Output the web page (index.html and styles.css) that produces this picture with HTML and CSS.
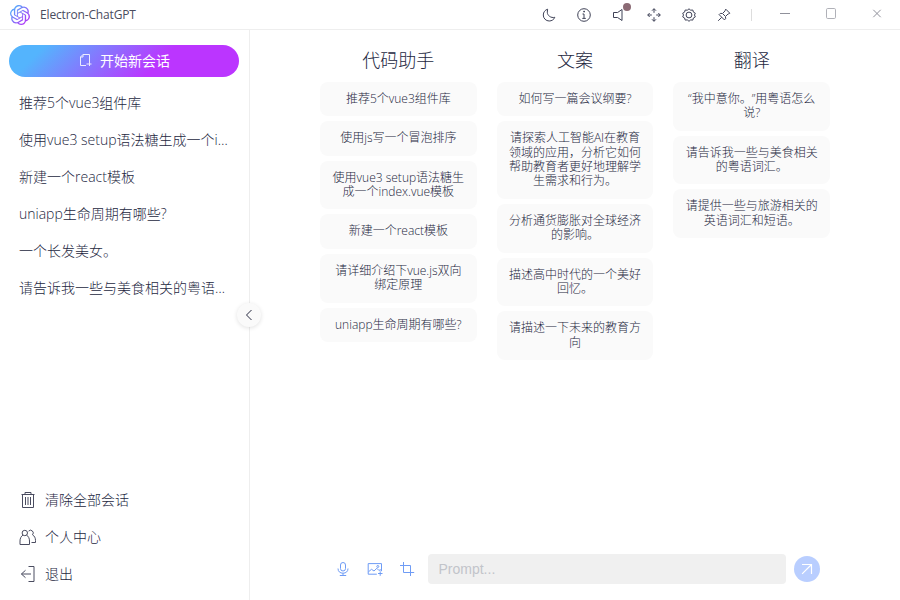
FILE: index.html
```html
<!DOCTYPE html>
<html lang="zh-CN">
<head>
<meta charset="utf-8">
<title>Electron-ChatGPT</title>
<link rel="stylesheet" href="styles.css">
</head>
<body>
<header class="titlebar">
  <svg class="logo" viewBox="0 0 24 24"><defs><linearGradient id="lg" x1="0" y1="0" x2="1" y2="1"><stop offset="0.1" stop-color="#4fb2fb"/><stop offset="0.85" stop-color="#b034f8"/></linearGradient></defs><path fill="url(#lg)" d="M22.2819 9.8211a5.9847 5.9847 0 0 0-.5157-4.9108 6.0462 6.0462 0 0 0-6.5098-2.9A6.0651 6.0651 0 0 0 4.9807 4.1818a5.9847 5.9847 0 0 0-3.9977 2.9 6.0462 6.0462 0 0 0 .7427 7.0966 5.98 5.98 0 0 0 .511 4.9107 6.051 6.051 0 0 0 6.5146 2.9001A5.9847 5.9847 0 0 0 13.2599 24a6.0557 6.0557 0 0 0 5.7718-4.2058 5.9894 5.9894 0 0 0 3.9977-2.9001 6.0557 6.0557 0 0 0-.7475-7.0729zm-9.022 12.6081a4.4755 4.4755 0 0 1-2.8764-1.0408l.1419-.0804 4.7783-2.7582a.7948.7948 0 0 0 .3927-.6813v-6.7369l2.02 1.1686a.071.071 0 0 1 .038.052v5.5826a4.504 4.504 0 0 1-4.4945 4.4944zm-9.6607-4.1254a4.4708 4.4708 0 0 1-.5346-3.0137l.142.0852 4.783 2.7582a.7712.7712 0 0 0 .7806 0l5.8428-3.3685v2.3324a.0804.0804 0 0 1-.0332.0615L9.74 19.9502a4.4992 4.4992 0 0 1-6.1408-1.6464zM2.3408 7.8956a4.485 4.485 0 0 1 2.3655-1.9728V11.6a.7664.7664 0 0 0 .3879.6765l5.8144 3.3543-2.0201 1.1685a.0757.0757 0 0 1-.071 0l-4.8303-2.7865A4.504 4.504 0 0 1 2.3408 7.872zm16.5963 3.8558L13.1038 8.364 15.1192 7.2a.0757.0757 0 0 1 .071 0l4.8303 2.7913a4.4944 4.4944 0 0 1-.6765 8.1042v-5.6772a.79.79 0 0 0-.407-.667zm2.0107-3.0231l-.142-.0852-4.7735-2.7818a.7759.7759 0 0 0-.7854 0L9.409 9.2297V6.8974a.0662.0662 0 0 1 .0284-.0615l4.8303-2.7866a4.4992 4.4992 0 0 1 6.6802 4.66zM8.3065 12.863l-2.02-1.1638a.0804.0804 0 0 1-.038-.0567V6.0742a4.4992 4.4992 0 0 1 7.3757-3.4537l-.142.0805L8.704 5.459a.7948.7948 0 0 0-.3927.6813zm1.0976-2.3654l2.602-1.4998 2.6069 1.4998v2.9994l-2.5974 1.4997-2.6067-1.4997Z"/></svg>
  <span class="app-name">Electron-ChatGPT</span>
  <div class="tools">
    <span class="tool"><svg class="icon" viewBox="0 0 16 16"><path d="M6.600 2.200C4 3 2.300 5.200 2.300 8a5.900 5.900 0 0 0 5.900 6c2.600 0 4.700-1.400 5.600-3.700C10 11.300 6.300 8.600 6.300 5.200c0-1.100.1-2.100.300-3z"/></svg></span>
    <span class="tool"><svg class="icon" viewBox="0 0 16 16"><circle cx="8" cy="8" r="6.300"/><path d="M6.500 7H8v4.300M6.300 11.400h3.500M7.700 4.200h.8v.8h-.8z"/></svg></span>
    <span class="tool"><svg class="icon" viewBox="0 0 16 16"><path d="M11 2.500v11L6.600 10.500H2.500V5.500h4.100z"/></svg><i class="dot"></i></span>
    <span class="tool"><svg class="icon" viewBox="0 0 16 16"><path d="M8 1.800v4M8 10.200v4M1.800 8h4M10.200 8h4M6 3.700l2-2 2 2M6 12.300l2 2 2-2M3.700 6l-2 2 2 2M12.300 6l2 2-2 2"/></svg></span>
    <span class="tool"><svg class="icon" viewBox="0 0 16 16"><path d="M6.300 3.200L8 1.800l1.700 1.400 2.100-.200.600 2.100 1.900 1.100L13.500 8l.8 1.900-1.900 1.100-.600 2.100-2.100-.2L8 14.300l-1.700-1.400-2.100.2-.600-2.100-1.900-1.100L2.500 8l-.8-1.800 1.900-1.100.600-2.100z"/><circle cx="8" cy="8" r="2.900"/></svg></span>
    <span class="tool"><svg class="icon" viewBox="0 0 16 16"><path d="M9.800 2.200l4 4-1 .7-.6-.1-2.700 2.700.1 2.200-1.200 1.200-5.300-5.300 1.200-1.200 2.200.1 2.700-2.700-.1-.7zM5.700 10.300L2.200 13.800M7 7l2 2"/></svg></span>
  </div>
  <i class="divider"></i>
  <div class="window-buttons">
    <span class="win"><svg class="icon" viewBox="0 0 16 16"><path d="M3 6.500h10"/></svg></span>
    <span class="win"><svg class="icon pale" viewBox="0 0 16 16"><rect x="3.500" y="1.500" width="9" height="10" rx="1.200"/></svg></span>
    <span class="win"><svg class="icon" viewBox="0 0 16 16"><path d="M4.300 2.800l7.400 7.400M11.700 2.800l-7.400 7.400"/></svg></span>
  </div>
</header>
<div class="body">
  <aside class="sidebar">
    <button class="new-chat"><svg class="icon" viewBox="0 0 16 16"><path d="M6 2.500H12.500v8.500M6 2.500L3.500 5v8.500h5.500M6 2.500V5H3.500M9.500 12h5M12.500 9.500v4.500"/></svg><span>开始新会话</span></button>
    <ul class="chats">
      <li>推荐5个vue3组件库</li>
      <li>使用vue3 setup语法糖生成一个index.vue模板</li>
      <li>新建一个react模板</li>
      <li>uniapp生命周期有哪些?</li>
      <li>一个长发美女。</li>
      <li>请告诉我一些与美食相关的粤语词汇。</li>
    </ul>
    <ul class="menu">
      <li><svg class="icon" viewBox="0 0 18 18"><path d="M2.500 3.500h13M6 3.300V1.500h6v1.800M3.500 3.700v12.800h11V3.700M6.500 6v8M9 6v8M11.500 6v8"/></svg><span>清除全部会话</span></li>
      <li><svg class="icon" viewBox="0 0 18 18"><circle cx="5.800" cy="5" r="2.700"/><path d="M4 7C2 8.300 1 10.500 1 13v3.500h9.500V13c0-2.500-1-4.700-3-6M9.600 3.100a2.600 2.600 0 1 1 3.900 3.700c2 1.200 3 3.200 3 5.700v2h-4"/></svg><span>个人中心</span></li>
      <li><svg class="icon" viewBox="0 0 18 18"><path d="M9.500 1.500h5.500v15H9.500M12 9h-9.500M6.500 5.300L2.400 9l4.100 3.700"/></svg><span>退出</span></li>
    </ul>
    <span class="collapse"><svg class="icon" viewBox="0 0 16 16"><path d="M10.500 3L5.500 8l5 5"/></svg></span>
  </aside>
  <main class="main">
    <div class="prompts">
      <section class="column">
        <h2>代码助手</h2>
        <p>推荐5个vue3组件库</p>
        <p>使用js写一个冒泡排序</p>
        <p>使用vue3 setup语法糖生成一个index.vue模板</p>
        <p>新建一个react模板</p>
        <p>请详细介绍下vue.js双向绑定原理</p>
        <p>uniapp生命周期有哪些?</p>
      </section>
      <section class="column">
        <h2>文案</h2>
        <p>如何写一篇会议纲要?</p>
        <p>请探索人工智能AI在教育领域的应用，分析它如何帮助教育者更好地理解学生需求和行为。</p>
        <p>分析通货膨胀对全球经济的影响。</p>
        <p>描述高中时代的一个美好回忆。</p>
        <p>请描述一下未来的教育方向</p>
      </section>
      <section class="column">
        <h2>翻译</h2>
        <p>“我中意你。”用粤语怎么说?</p>
        <p>请告诉我一些与美食相关的粤语词汇。</p>
        <p>请提供一些与旅游相关的英语词汇和短语。</p>
      </section>
    </div>
    <footer class="composer">
      <svg class="icon" viewBox="0 0 16 16"><rect x="5.500" y="1.500" width="5" height="8.500" rx="2.500"/><path d="M3 7.500c0 3 2 4.700 5 4.700s5-1.700 5-4.700M8 12.200v2.300M4.800 14.500h6.400"/></svg>
      <svg class="icon" viewBox="0 0 16 16"><path d="M9.800 13.200H1.200V2.600h13.300v7.600M1.500 10.800l3-2.500 2.500 1.700 2.800-2.700 2 2 2.400-.5M11 12.500h4.500M13.200 10.300v4.500"/><circle cx="10.800" cy="5.500" r="1"/></svg>
      <svg class="icon" viewBox="0 0 16 16"><path d="M4.500 1v10.500H15.200M1 4.500h10.500V15"/></svg>
      <input class="field" type="text" placeholder="Prompt...">
      <button class="send"><svg class="icon" viewBox="0 0 16 16"><path d="M3 3.500h9.500v9.500M12.500 3.500l-9.400 9.400"/></svg></button>
    </footer>
  </main>
</div>
</body>
</html>
```
FILE: styles.css
```css
* { box-sizing: border-box; margin: 0; padding: 0; }
body {
  width: 900px; height: 600px; overflow: hidden;
  display: flex; flex-direction: column;
  background: #fff; color: #25283f;
  font-family: "Open Sans", "Noto Sans CJK SC", sans-serif;
  font-weight: 300; font-size: 14px;
  text-spacing-trim: space-all;
}
ul { list-style: none; }
button { border: 0; font: inherit; }
.icon { width: 16px; height: 16px; flex: none; display: block; fill: none; stroke: currentColor; stroke-width: 1; }

.titlebar { height: 30px; flex: none; display: flex; align-items: center; border-bottom: 1px solid #eee; }
.logo { width: 20px; height: 20px; margin-left: 10px; }
.app-name { margin-left: 10px; font-size: 12px; line-height: 16px; font-weight: 400; letter-spacing: -0.15px; color: #4a4c5e; }
.tools { display: flex; margin-left: auto; margin-right: 1px; color: #3f4257; }
.tool { width: 35px; display: flex; justify-content: center; position: relative; }
.dot { position: absolute; top: -4px; right: 5px; width: 8px; height: 8px; border-radius: 50%; background: #8b6a74; }
.divider { width: 1px; height: 12px; margin: 0 10px 0 9px; background: #ddd; }
.window-buttons { display: flex; color: #90919b; }
.win { width: 46px; display: flex; justify-content: center; }
.pale { color: #b0b1b8; }

.body { flex: 1; display: flex; min-height: 0; }
.sidebar { width: 250px; flex: none; position: relative; display: flex; flex-direction: column; padding: 15px 10px 8px 9px; border-right: 1px solid #eee; }
.new-chat {
  height: 32px; width: 230px; flex: none; border-radius: 16px; color: #fff; font-weight: 400;
  display: flex; align-items: center; justify-content: center; gap: 7px; padding: 0 1px 2px 0;
  background: linear-gradient(135deg, #54b4fd 14%, #bb35ff 64%);
}
.new-chat .icon { width: 16px; height: 16px; opacity: .85; }
.chats { padding: 7px 10px 0; }
.chats li { height: 37px; line-height: 37px; white-space: nowrap; overflow: hidden; text-overflow: ellipsis; }
.menu { margin-top: auto; padding-left: 10px; }
.menu li { height: 37px; display: flex; align-items: center; gap: 8px; }
.menu span { padding-bottom: 2px; }
.menu .icon { width: 18px; height: 18px; color: #4a4c60; }
.collapse {
  position: absolute; left: 237px; top: 273px; width: 24px; height: 24px; border-radius: 50%;
  display: flex; align-items: center; justify-content: center;
  background: #fafafa; box-shadow: 0 1px 4px rgba(0, 0, 0, .12);
}

.main { flex: 1; display: flex; flex-direction: column; align-items: center; padding: 17.700px 0 16px; }
.prompts { width: 510px; display: grid; grid-template-columns: repeat(3, minmax(0, 1fr)); gap: 20px; }
.column { display: flex; flex-direction: column; gap: 5px; text-align: center; }
.column h2 { height: 29px; line-height: 25px; font-size: 18px; font-weight: 300; }
.column p { padding: 10px; border-radius: 8px; background: #fafafa; font-size: 12px; line-height: 14.4px; }
.composer { width: 490px; margin-top: auto; display: flex; align-items: center; gap: 16px; height: 30px; color: #6f9cf5; padding-left: 5px; }
.field { width: 358px; height: 30px; flex: none; margin-left: -3px; padding: 0 10.500px; border: 0; border-radius: 4px; background: #f0f0f0; font: 14px "Liberation Sans", sans-serif; }
.field::placeholder { color: #c2c4ca; }
.send { width: 26px; height: 26px; flex: none; margin-left: -8px; border-radius: 50%; display: flex; align-items: center; justify-content: center; background: #b9ceff; color: #fff; }
.send .icon { stroke-width: 1.200; }
```
